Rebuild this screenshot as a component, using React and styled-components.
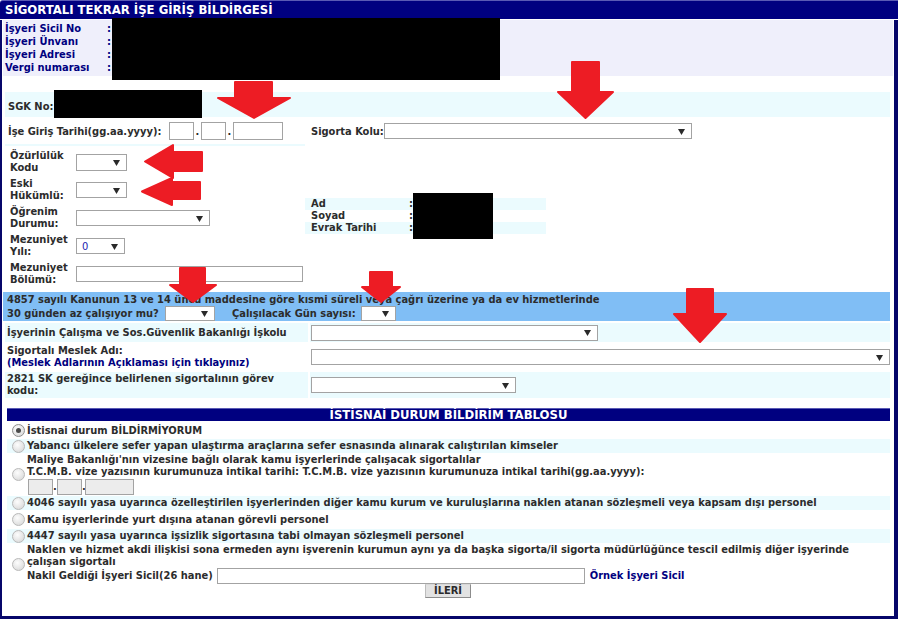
import React from "react";
import styled, { createGlobalStyle } from "styled-components";

const NAVY = "#000080";
const CYAN = "#ebfbfe";
const TEXT = "#2c2c2c";

const GlobalStyle = createGlobalStyle`
  html, body {
    margin: 0;
    padding: 0;
    background: #fff;
  }
`;

const Page = styled.div`
  position: relative;
  width: 898px;
  height: 619px;
  overflow: hidden;
  font-family: "DejaVu Sans Condensed", "DejaVu Sans", sans-serif;
  font-stretch: condensed;
  font-size: 11px;
  font-weight: bold;
  color: ${TEXT};
`;

const TitleBar = styled.div`
  height: 18px;
  background: ${NAVY};
  border-top: 1px solid #5a5ab4;
  border-radius: 3px 0 0 0;
  color: #fff;
  font-size: 13px;
  line-height: 18px;
  padding-left: 5px;
  white-space: nowrap;
`;

const Body = styled.div`
  box-sizing: border-box;
  height: 600px;
  border-left: 2px solid #06066a;
  border-right: 4px solid #06066a;
  border-bottom: 4px solid #06066a;
`;

/* employer info block */
const InfoBlock = styled.div`
  margin: 1px 1px 0 1px;
  padding: 2px;
  background: #efeffb;
  display: grid;
  grid-template-columns: 102px 1fr;
  line-height: 13px;
  color: ${NAVY};
`;

const SgkRow = styled.div`
  box-sizing: border-box;
  margin: 16px 4px 0 3px;
  height: 25px;
  background: ${CYAN};
  display: flex;
  align-items: flex-end;
  padding: 0 0 4px 3px;
  line-height: 13px;
`;

const DateRow = styled.div`
  display: flex;
  height: 28px;
  margin: 1px 4px 0 3px;
`;

const DateCell = styled.div`
  box-sizing: border-box;
  width: 300px;
  display: flex;
  align-items: center;
  padding: 0 0 2px 3px;
  box-shadow: inset 0 -2px ${CYAN};
  white-space: nowrap;
`;

const KoluCell = styled.div`
  flex: 1;
  display: flex;
  align-items: center;
  padding: 0 0 2px 6px;
  white-space: nowrap;
`;

const FixedLabel = styled.span`
  display: inline-block;
  width: ${(p) => p.$w}px;
  flex-shrink: 0;
  white-space: nowrap;
  margin-left: ${(p) => p.$ml || 0}px;
`;

const TextInput = styled.div`
  box-sizing: border-box;
  width: ${(p) => p.$w}px;
  height: ${(p) => p.$h || 18}px;
  flex-shrink: 0;
  margin-left: ${(p) => p.$ml || 0}px;
  border: 1px solid #a3a3a3;
  background: ${(p) => (p.$disabled ? "#ececec" : "#fff")};
`;

const Dot = styled.span`
  display: inline-block;
  width: ${(p) => p.$w || 7}px;
  text-align: center;
`;

const SelectBox = styled.div`
  box-sizing: border-box;
  width: ${(p) => p.$w}px;
  height: ${(p) => p.$h || 16}px;
  flex-shrink: 0;
  border: 1px solid #a3a3a3;
  background: #fff;
  display: flex;
  align-items: center;
  justify-content: space-between;
  padding: 0 6px 0 5px;
  font-weight: normal;
  color: #1d1db0;
`;

const Caret = () => (
  <svg width="7" height="7" viewBox="0 0 7 7">
    <path d="M0 1 H7 L3.5 7 Z" fill="#2a2a2a" />
  </svg>
);

const Select = ({ w, h, value }) => (
  <SelectBox $w={w} $h={h}>
    <span>{value}</span>
    <Caret />
  </SelectBox>
);

/* left form column + person summary */
const MidSection = styled.div`
  display: flex;
  margin: 0 4px 0 3px;
`;

const FormColumn = styled.div`
  width: 300px;
  padding-top: 2px;
`;

const FormRow = styled.div`
  display: grid;
  grid-template-columns: 66px auto;
  align-items: center;
  justify-items: start;
  height: 28px;
  padding-left: 5px;
`;

const FormLabel = styled.div`
  line-height: 12px;
  white-space: nowrap;
`;

const PersonColumn = styled.div`
  padding-top: 52px;
`;

const PersonRow = styled.div`
  width: 235px;
  height: 12px;
  line-height: 12px;
  padding-left: 6px;
  display: grid;
  grid-template-columns: 98px 1fr;
  background: ${(p) => (p.$shade ? CYAN : "transparent")};
`;

/* part-time band */
const Band = styled.div`
  box-sizing: border-box;
  margin: 4px 4px 0 1px;
  height: 29px;
  padding: 2px 0 0 4px;
  background: #80bef5;
  white-space: nowrap;
`;

const BandLine = styled.div`
  line-height: 12px;
`;

const BandControls = styled.div`
  display: flex;
  align-items: center;
  height: 15px;
`;

const FieldTable = styled.div`
  margin: 2px 4px 0 3px;
  display: flex;
  flex-direction: column;
  gap: 1px;
`;

const FieldRow = styled.div`
  display: grid;
  grid-template-columns: 303px 1fr;
  column-gap: 2px;
  height: ${(p) => p.$h}px;
`;

const FieldCell = styled.div`
  display: flex;
  align-items: center;
  padding-left: ${(p) => p.$pl || 2}px;
  line-height: 12px;
  white-space: nowrap;
  background: ${(p) => (p.$shade ? CYAN : "transparent")};
`;

const Link = styled.span`
  color: ${NAVY};
  margin-left: ${(p) => p.$ml || 0}px;
`;

const TableHeader = styled.div`
  margin: 10px 4px 0 5px;
  height: 12px;
  border-top: 1px solid #5a5ab4;
  background: ${NAVY};
  color: #fff;
  font-size: 13px;
  line-height: 12px;
  text-align: center;
  white-space: nowrap;
`;

const RadioList = styled.div`
  margin: 2px 4px 0 5px;
  display: flex;
  flex-direction: column;
  gap: 1px;
`;

const RadioRow = styled.div`
  display: flex;
  align-items: center;
  min-height: ${(p) => p.$h || 14}px;
  padding-left: 5px;
  line-height: 12px;
  white-space: nowrap;
  background: ${(p) => (p.$shade ? CYAN : "transparent")};
`;

const RadioDot = styled.span`
  box-sizing: border-box;
  width: 13px;
  height: 13px;
  flex-shrink: 0;
  margin-right: 2px;
  border-radius: 50%;
  border: 1px solid ${(p) => (p.$checked ? "#8f8f8f" : "#b9b9b9")};
  background: radial-gradient(circle at 40% 35%, #fdfdfd 0%, #e6e6e6 55%, #d2d2d2 100%);
  display: flex;
  align-items: center;
  justify-content: center;

  &::after {
    content: "";
    display: ${(p) => (p.$checked ? "block" : "none")};
    width: 5px;
    height: 5px;
    border-radius: 50%;
    background: #4a4a4a;
  }
`;

const RadioText = styled.div`
  display: flex;
  flex-direction: column;
`;

const InlineControls = styled.div`
  display: flex;
  align-items: center;
  height: ${(p) => p.$h || 16}px;
  margin-left: ${(p) => p.$ml || 0}px;
`;

const ButtonRow = styled.div`
  display: flex;
  justify-content: center;
`;

const NextButton = styled.div`
  box-sizing: border-box;
  height: 14px;
  padding: 0 8px;
  border: 1px solid #8c8c8c;
  border-top-color: #d8d8d8;
  border-left-color: #bcbcbc;
  background: #e2e2e2;
  line-height: 12px;
  color: #2a2a2a;
`;

/* red markers and blacked-out values drawn over the form */
const Overlay = styled.svg`
  position: absolute;
  left: 0;
  top: 0;
  pointer-events: none;
`;

const downArrow = (x1, x2, top, hx1, hx2, hy, tip) =>
  `${x1},${top} ${x2},${top} ${x2},${hy} ${hx2},${hy} ${(hx1 + hx2) / 2},${tip} ${hx1},${hy} ${x1},${hy}`;

const leftArrow = (y1, y2, right, hy1, hy2, hx, tip) =>
  `${right},${y1} ${right},${y2} ${hx},${y2} ${hx},${hy2} ${tip},${(hy1 + hy2) / 2} ${hx},${hy1} ${hx},${y1}`;

const arrows = [
  downArrow(235, 272, 82, 218, 290, 98, 118),
  downArrow(572, 599, 62, 558, 613, 92, 118),
  downArrow(687, 713, 289, 674, 726, 314, 342),
  downArrow(180, 205, 268, 170, 216, 285, 302),
  downArrow(370, 392, 272, 362, 400, 287, 302),
  leftArrow(152, 171, 202, 145, 178, 173, 145),
  leftArrow(182, 199, 200, 178, 205, 172, 142),
];

const blackouts = [
  { x: 112, y: 18, w: 388, h: 62 },
  { x: 54, y: 90, w: 148, h: 28 },
  { x: 413, y: 193, w: 80, h: 46 },
];

const infoLabels = ["İşyeri Sicil No", "İşyeri Ünvanı", "İşyeri Adresi", "Vergi numarası"];

export default function App() {
  return (
    <Page>
      <GlobalStyle />
      <TitleBar>SİGORTALI TEKRAR İŞE GİRİŞ BİLDİRGESİ</TitleBar>
      <Body>
        <InfoBlock>
          {infoLabels.map((l) => (
            <React.Fragment key={l}>
              <span>{l}</span>
              <span>:</span>
            </React.Fragment>
          ))}
        </InfoBlock>

        <SgkRow>SGK No:</SgkRow>

        <DateRow>
          <DateCell>
            <FixedLabel $w={161}>İşe Giriş Tarihi(gg.aa.yyyy):</FixedLabel>
            <TextInput $w={25} />
            <Dot>.</Dot>
            <TextInput $w={25} />
            <Dot>.</Dot>
            <TextInput $w={50} />
          </DateCell>
          <KoluCell>
            <FixedLabel $w={73}>Sigorta Kolu:</FixedLabel>
            <Select w={308} />
          </KoluCell>
        </DateRow>

        <MidSection>
          <FormColumn>
            <FormRow>
              <FormLabel>Özürlülük<br />Kodu</FormLabel>
              <Select w={51} h={17} />
            </FormRow>
            <FormRow>
              <FormLabel>Eski<br />Hükümlü:</FormLabel>
              <Select w={51} />
            </FormRow>
            <FormRow>
              <FormLabel>Öğrenim<br />Durumu:</FormLabel>
              <Select w={134} />
            </FormRow>
            <FormRow>
              <FormLabel>Mezuniyet<br />Yılı:</FormLabel>
              <Select w={49} value="0" />
            </FormRow>
            <FormRow>
              <FormLabel>Mezuniyet<br />Bölümü:</FormLabel>
              <TextInput $w={227} $h={16} />
            </FormRow>
          </FormColumn>
          <PersonColumn>
            <PersonRow $shade>
              <span>Ad</span>
              <span>:</span>
            </PersonRow>
            <PersonRow>
              <span>Soyad</span>
              <span>:</span>
            </PersonRow>
            <PersonRow $shade>
              <span>Evrak Tarihi</span>
              <span>:</span>
            </PersonRow>
          </PersonColumn>
        </MidSection>

        <Band>
          <BandLine>
            4857 sayılı Kanunun 13 ve 14 üncü maddesine göre kısmi süreli veya çağrı üzerine ya da ev hizmetlerinde
          </BandLine>
          <BandControls>
            <FixedLabel $w={158}>30 günden az çalışıyor mu?</FixedLabel>
            <Select w={50} h={15} />
            <FixedLabel $w={129} $ml={17}>Çalışılacak Gün sayısı:</FixedLabel>
            <Select w={35} h={15} />
          </BandControls>
        </Band>

        <FieldTable>
          <FieldRow $h={19}>
            <FieldCell $shade>İşyerinin Çalışma ve Sos.Güvenlik Bakanlığı İşkolu</FieldCell>
            <FieldCell $shade $pl={1}>
              <Select w={287} />
            </FieldCell>
          </FieldRow>
          <FieldRow $h={28}>
            <FieldCell>
              <div>
                Sigortalı Meslek Adı:
                <br />
                <Link>(Meslek Adlarının Açıklaması için tıklayınız)</Link>
              </div>
            </FieldCell>
            <FieldCell $pl={1}>
              <Select w={579} />
            </FieldCell>
          </FieldRow>
          <FieldRow $h={26}>
            <FieldCell $shade>
              <div>
                2821 SK gereğince belirlenen sigortalının görev
                <br />
                kodu:
              </div>
            </FieldCell>
            <FieldCell $shade $pl={1}>
              <Select w={205} />
            </FieldCell>
          </FieldRow>
        </FieldTable>

        <TableHeader>İSTİSNAİ DURUM BİLDİRİM TABLOSU</TableHeader>

        <RadioList>
          <RadioRow $h={15}>
            <RadioDot $checked />
            İstisnai durum BİLDİRMİYORUM
          </RadioRow>
          <RadioRow $shade>
            <RadioDot />
            Yabancı ülkelere sefer yapan ulaştırma araçlarına sefer esnasında alınarak calıştırılan kimseler
          </RadioRow>
          <RadioRow>
            <RadioDot />
            <RadioText>
              <div>Maliye Bakanlığı'nın vizesine bağlı olarak kamu işyerlerinde çalışacak sigortalılar</div>
              <div>
                T.C.M.B. vize yazısının kurumunuza intikal tarihi: T.C.M.B. vize yazısının kurumunuza intikal
                tarihi(gg.aa.yyyy):
              </div>
              <InlineControls $h={17} $ml={1}>
                <TextInput $w={25} $h={16} $disabled />
                <Dot $w={4}>.</Dot>
                <TextInput $w={25} $h={16} $disabled />
                <Dot $w={3}>.</Dot>
                <TextInput $w={49} $h={16} $disabled />
              </InlineControls>
            </RadioText>
          </RadioRow>
          <RadioRow $shade>
            <RadioDot />
            4046 sayılı yasa uyarınca özelleştirilen işyerlerinden diğer kamu kurum ve kuruluşlarına naklen atanan
            sözleşmeli veya kapsam dışı personel
          </RadioRow>
          <RadioRow $h={17}>
            <RadioDot />
            Kamu işyerlerinde yurt dışına atanan görevli personel
          </RadioRow>
          <RadioRow $shade>
            <RadioDot />
            4447 sayılı yasa uyarınca işsizlik sigortasına tabi olmayan sözleşmeli personel
          </RadioRow>
          <RadioRow>
            <RadioDot />
            <RadioText>
              <div>
                Naklen ve hizmet akdi ilişkisi sona ermeden aynı işverenin kurumun aynı ya da başka sigorta/il
                sigorta müdürlüğünce tescil edilmiş diğer işyerinde
              </div>
              <div>çalışan sigortalı</div>
              <InlineControls>
                Nakil Geldiği İşyeri Sicil(26 hane)
                <TextInput $w={368} $h={16} $ml={4} />
                <Link $ml={5}>Örnek İşyeri Sicil</Link>
              </InlineControls>
            </RadioText>
          </RadioRow>
        </RadioList>

        <ButtonRow>
          <NextButton>İLERİ</NextButton>
        </ButtonRow>
      </Body>

      <Overlay width="898" height="619" viewBox="0 0 898 619">
        {blackouts.map((b, i) => (
          <rect key={i} x={b.x} y={b.y} width={b.w} height={b.h} fill="#000" />
        ))}
        {arrows.map((pts, i) => (
          <polygon key={i} points={pts} fill="#ed1c24" stroke="#ed1c24" strokeWidth="2" strokeLinejoin="round" />
        ))}
      </Overlay>
    </Page>
  );
}
